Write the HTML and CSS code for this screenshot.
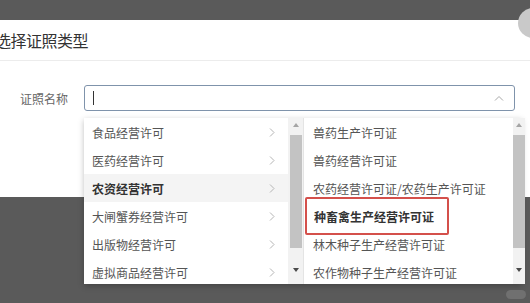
FILE: index.html
```html
<!DOCTYPE html>
<html lang="zh-CN">
<head>
    <meta charset="UTF-8">
    <title>选择证照类型</title>
    <link rel="stylesheet" href="styles.css">
</head>
<body>
    <div class="close-btn"></div>
    <div class="dialog">
        <div class="dialog-header">
            <h3 class="dialog-title">选择证照类型</h3>
        </div>
        <div class="dialog-body">
            <div class="form-row">
                <label class="form-label">证照名称</label>
                <div class="select-box">
                    <span class="caret"></span>
                    <svg class="arrow-up" width="10" height="6" viewBox="0 0 10 6">
                        <path d="M1 5.5 L5 1.5 L9 5.5" fill="none" stroke="#a8a8a8" stroke-width="1"/>
                    </svg>
                </div>
            </div>
        </div>
    </div>

    <div class="cascader">
        <div class="panel">
            <ul class="menu">
                <li>食品经营许可<svg class="chev" width="6" height="9" viewBox="0 0 6 9"><path d="M1 0.5 L5 4.5 L1 8.5"/></svg></li>
                <li>医药经营许可<svg class="chev" width="6" height="9" viewBox="0 0 6 9"><path d="M1 0.5 L5 4.5 L1 8.5"/></svg></li>
                <li class="active">农资经营许可<svg class="chev" width="6" height="9" viewBox="0 0 6 9"><path d="M1 0.5 L5 4.5 L1 8.5"/></svg></li>
                <li>大闸蟹券经营许可<svg class="chev" width="6" height="9" viewBox="0 0 6 9"><path d="M1 0.5 L5 4.5 L1 8.5"/></svg></li>
                <li>出版物经营许可<svg class="chev" width="6" height="9" viewBox="0 0 6 9"><path d="M1 0.5 L5 4.5 L1 8.5"/></svg></li>
                <li>虚拟商品经营许可<svg class="chev" width="6" height="9" viewBox="0 0 6 9"><path d="M1 0.5 L5 4.5 L1 8.5"/></svg></li>
            </ul>
            <div class="scrollbar">
                <span class="sb-up"></span>
                <span class="sb-thumb"></span>
                <span class="sb-down"></span>
            </div>
        </div>
        <div class="panel panel-right">
            <ul class="menu">
                <li>兽药生产许可证</li>
                <li>兽药经营许可证</li>
                <li>农药经营许可证/农药生产许可证</li>
                <li class="picked">种畜禽生产经营许可证</li>
                <li>林木种子生产经营许可证</li>
                <li>农作物种子生产经营许可证</li>
            </ul>
            <div class="scrollbar">
                <span class="sb-up"></span>
                <span class="sb-thumb"></span>
                <span class="sb-down"></span>
            </div>
        </div>
    </div>

    <div class="pill"></div>
</body>
</html>
```

FILE: styles.css
```css
body {
    margin: 0;
    width: 530px;
    height: 303px;
    overflow: hidden;
    background-color: #5a5a5a;
    font-family: "Noto Sans CJK SC", "Noto Sans", sans-serif;
    position: relative;
}

.close-btn {
    position: absolute;
    top: 8px;
    left: 518px;
    width: 30px;
    height: 30px;
    border-radius: 50%;
    background-color: #c9c9c9;
    z-index: 2;
}

.dialog {
    margin-top: 20px;
    height: 177px;
    background-color: #fff;
}

.dialog-header {
    height: 40px;
    border-bottom: 1px solid #ececec;
    display: flex;
    align-items: center;
}

.dialog-title {
    margin: 0 0 0 -5px;
    font-size: 16px;
    font-weight: normal;
    color: #333;
    letter-spacing: -0.5px;
}

.dialog-body {
    padding-top: 24px;
}

.form-row {
    display: flex;
    align-items: center;
}

.form-label {
    width: 48px;
    margin-left: 20px;
    margin-right: 16px;
    font-size: 12px;
    color: #666;
}

.select-box {
    width: 411px;
    height: 24px;
    border: 1px solid #7f93ab;
    border-radius: 3px;
    display: flex;
    align-items: center;
    justify-content: space-between;
    padding: 0 10px 0 8px;
}

.caret {
    width: 1px;
    height: 14px;
    background-color: #333;
}

.cascader {
    position: absolute;
    top: 118px;
    left: 84px;
    width: 438px;
    height: 166px;
    display: flex;
    background-color: #fff;
    box-shadow: 0 2px 6px rgba(0, 0, 0, 0.25);
}

.panel {
    width: 219px;
    display: flex;
}

.panel-right {
    border-left: 1px solid #e4e4e4;
    width: 218px;
}

.menu {
    flex: 1;
    list-style: none;
    margin: 0;
    padding: 0;
}

.menu li {
    height: 28px;
    display: flex;
    align-items: center;
    justify-content: space-between;
    padding: 0 13px 0 8px;
    font-size: 12px;
    color: #555;
    white-space: nowrap;
}

.panel-right .menu li {
    padding-left: 9px;
}

.menu li.active {
    background-color: #f4f4f4;
    font-weight: bold;
    color: #333;
}

.menu li.picked {
    font-weight: bold;
    color: #333;
    margin: -5px 64px -5px 1px;
    padding-left: 7px;
    height: 38px;
    border: 2px solid #d4504b;
    border-radius: 2px;
    box-sizing: border-box;
}

.chev path {
    fill: none;
    stroke: #b4b4b4;
    stroke-width: 1;
}

.scrollbar {
    width: 15px;
    background-color: #f2f2f2;
    display: flex;
    flex-direction: column;
    align-items: center;
}

.sb-up {
    margin-top: 5px;
    width: 0;
    height: 0;
    border-left: 3.5px solid transparent;
    border-right: 3.5px solid transparent;
    border-bottom: 4px solid #a5a5a5;
}

.sb-thumb {
    margin-top: 8px;
    width: 12px;
    height: 113px;
    background-color: #c3c3c3;
}

.sb-down {
    margin-top: 20px;
    width: 0;
    height: 0;
    border-left: 3.5px solid transparent;
    border-right: 3.5px solid transparent;
    border-top: 4px solid #4a4a4a;
}

.pill {
    position: absolute;
    top: 290px;
    left: 506px;
    width: 20px;
    height: 9px;
    border-radius: 5px;
    background-color: #707070;
}
```
